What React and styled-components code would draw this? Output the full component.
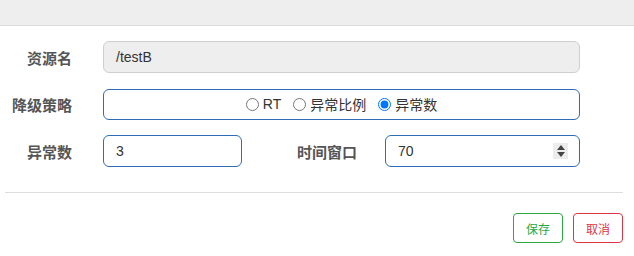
import React from "react";
import styled, { createGlobalStyle } from "styled-components";

const Global = createGlobalStyle`
  html, body { margin: 0; padding: 0; background: #fff; }
  body { font-family: "Liberation Sans", "Noto Sans CJK SC", sans-serif; color: #333; font-size: 14px; }
`;

const Page = styled.div`
  width: 634px;
  height: 256px;
  background: #fff;
  overflow: hidden;
`;

const Header = styled.div`
  height: 25px;
  background: #eeeeee;
  border-bottom: 1px solid #dcdcdc;
`;

const Form = styled.div`
  display: flex;
  flex-direction: column;
  gap: 15px;
  padding: 15px 54px 0 0;
`;

const Row = styled.div`
  display: flex;
  align-items: center;
  height: 32px;
`;

const Label = styled.label`
  flex: none;
  width: ${(p) => p.$w}px;
  margin-right: ${(p) => p.$gap}px;
  text-align: right;
  font-family: "Noto Sans CJK SC", sans-serif;
  font-weight: 700;
  font-size: 15px;
  color: #555;
`;

const Field = styled.div`
  position: relative;
  box-sizing: border-box;
  height: ${(p) => (p.$h ? p.$h : 32)}px;
  ${(p) => (p.$w ? `width: ${p.$w}px; flex: none;` : "flex: 1;")}
  border: 1px solid ${(p) => (p.$disabled ? "#cfcfcf" : "#2e6db4")};
  background: ${(p) => (p.$disabled ? "#eeeeee" : "#fff")};
  border-radius: 6px;
  display: flex;
  align-items: center;
  justify-content: ${(p) => (p.$center ? "center" : "flex-start")};
  padding: 0 12px;
  font-size: 14px;
  color: #333;
`;

const RadioGroup = styled.div`
  display: flex;
  align-items: center;
  gap: 12px;
`;

const RadioItem = styled.label`
  display: inline-flex;
  align-items: center;
  font-family: "Liberation Sans", "Noto Sans CJK SC", sans-serif;
  font-size: 14px;
  color: #333;
  input { margin: 0 4px 0 0; width: 13px; height: 13px; }
`;

const Spinner = styled.div`
  position: absolute;
  right: 11px;
  top: 7px;
  width: 15px;
  height: 16px;
  background: #ececec;
  display: flex;
  flex-direction: column;
  align-items: center;
  justify-content: center;
  gap: 2px;
`;

const Divider = styled.div`
  margin: 25px 11px 0 5px;
  height: 1px;
  background: #dddddd;
`;

const Footer = styled.div`
  display: flex;
  justify-content: flex-end;
  gap: 10px;
  padding: 20px 11px 0 0;
`;

const Btn = styled.button`
  box-sizing: border-box;
  height: 30px;
  width: 50px;
  padding: 0;
  background: #fff;
  border: 1px solid ${(p) => p.$color};
  color: ${(p) => p.$color};
  border-radius: 4px;
  font-family: "Noto Sans CJK SC", sans-serif;
  font-size: 12px;
`;

export default function App() {
  return (
    <Page>
      <Global />
      <Header />
      <Form>
        <Row>
          <Label $w={72} $gap={31}>资源名</Label>
          <Field $disabled>/testB</Field>
        </Row>
        <Row>
          <Label $w={72} $gap={31}>降级策略</Label>
          <Field $center $h={31}>
            <RadioGroup>
              <RadioItem><input type="radio" name="g" readOnly />RT</RadioItem>
              <RadioItem><input type="radio" name="g" readOnly />异常比例</RadioItem>
              <RadioItem><input type="radio" name="g" defaultChecked />异常数</RadioItem>
            </RadioGroup>
          </Field>
        </Row>
        <Row>
          <Label $w={72} $gap={31}>异常数</Label>
          <Field $w={139}>3</Field>
          <Label $w={115} $gap={28}>时间窗口</Label>
          <Field>
            70
            <Spinner>
              <svg width="8" height="5" viewBox="0 0 8 5"><path d="M4 0L8 5H0z" fill="#444" /></svg>
              <svg width="8" height="5" viewBox="0 0 8 5"><path d="M0 0H8L4 5z" fill="#444" /></svg>
            </Spinner>
          </Field>
        </Row>
      </Form>
      <Divider />
      <Footer>
        <Btn $color="#28a745">保存</Btn>
        <Btn $color="#dc3545">取消</Btn>
      </Footer>
    </Page>
  );
}
